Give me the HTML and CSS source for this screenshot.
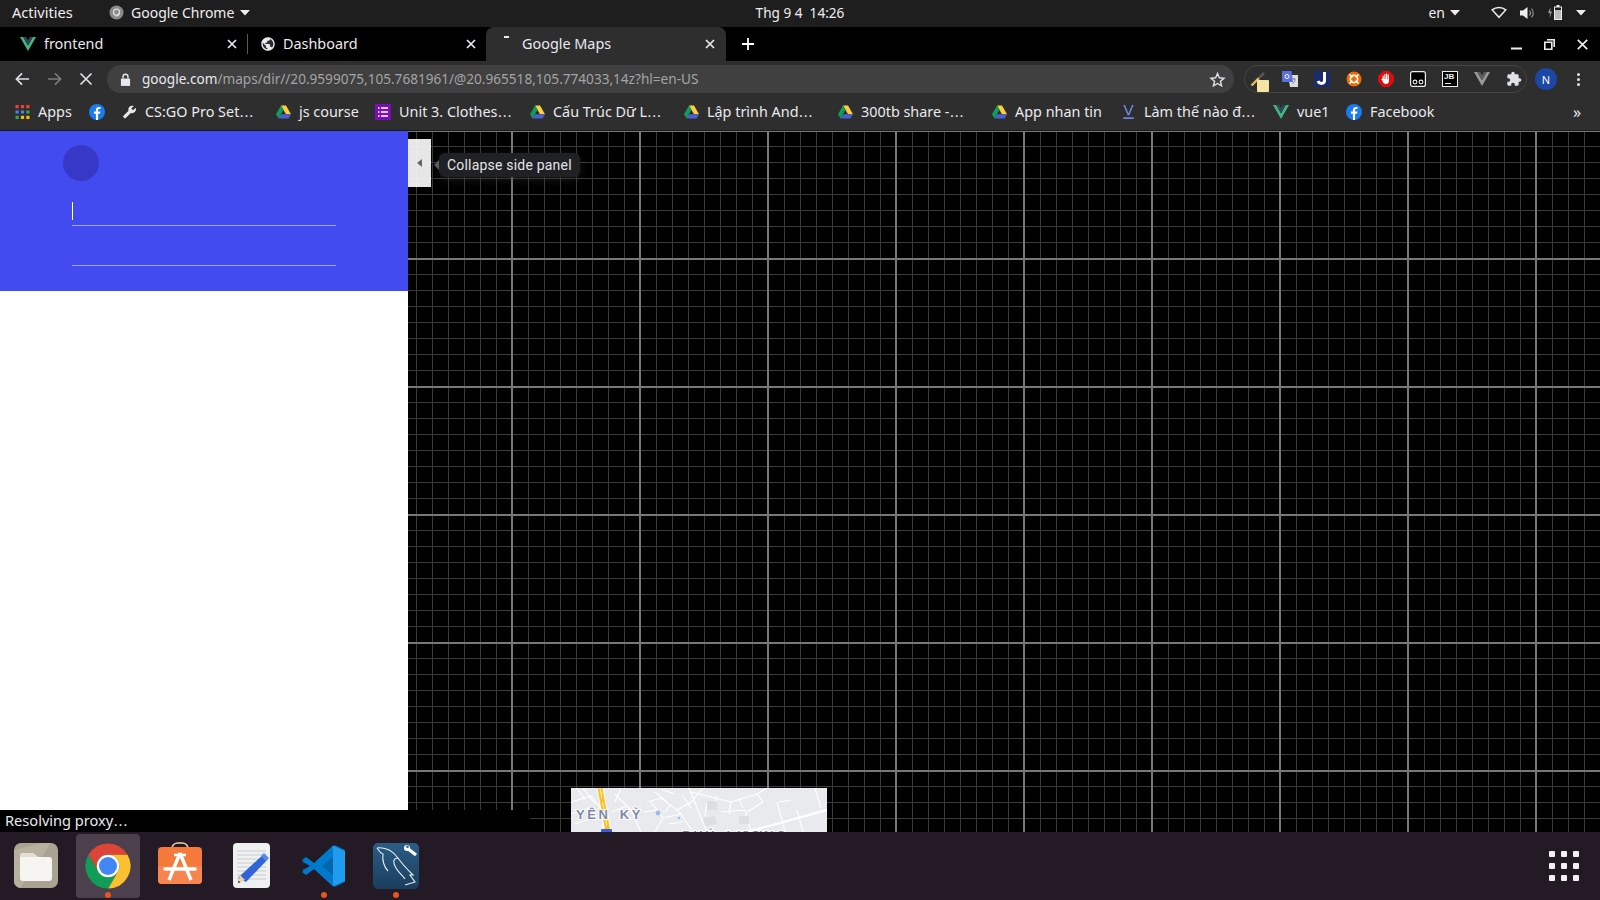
FILE: index.html
```html
<!DOCTYPE html>
<html lang="en">
<head>
<meta charset="utf-8">
<title>Google Maps</title>
<link rel="stylesheet" href="styles.css">
</head>
<body>
<svg class="defs" width="0" height="0" aria-hidden="true">
  <symbol id="vue" viewBox="0 0 256 221"><path fill="#41b883" d="M0 0L128 221 256 0H205L128 133 51 0Z"/><path fill="#2f4a55" d="M51 0L128 133 205 0H158L128 51 98 0Z"/></symbol>
  <symbol id="drive" viewBox="0 0 24 21"><path fill="#ffcd40" d="M8 0H16L24 14H16Z"/><path fill="#0f9d58" d="M8 0L12 7 4 21 0 14Z"/><path fill="#4a5fd0" d="M8 14H24L20 21H4Z"/></symbol>
  <symbol id="fb" viewBox="0 0 24 24"><circle cx="12" cy="12" r="12" fill="#1a7cf0"/><path fill="#fff" d="M13.6 24V14.8H16.6L17.1 11.4H13.6V9.3C13.6 8.3 14 7.6 15.4 7.6H17.2V4.6C16.8 4.5 15.8 4.4 14.7 4.4 12.2 4.4 10.4 5.9 10.4 8.8V11.4H7.4V14.8H10.4V24Z"/></symbol>
  <symbol id="close" viewBox="0 0 10 10"><path d="M1 1L9 9M9 1L1 9" stroke="#e8eaed" stroke-width="1.7" fill="none"/></symbol>
  <symbol id="caret" viewBox="0 0 10 6"><path fill="#eee" d="M0 0H10L5 5.5Z"/></symbol>
</svg>

<div class="screen">
  <header class="topbar">
    <div class="top-left">
      <span class="activities">Activities</span>
      <span class="appmenu">
        <svg class="top-chrome" viewBox="0 0 16 16"><circle cx="8" cy="8" r="7.5" fill="#8a8a8a"/><circle cx="8" cy="7.6" r="3.2" fill="none" stroke="#ddd" stroke-width="1.4"/><path d="M11 8.5C10.6 11 9 12 7 12" stroke="#ddd" stroke-width="1.2" fill="none"/></svg>
        <span>Google Chrome</span>
        <svg class="caret"><use href="#caret"/></svg>
      </span>
    </div>
    <div class="clock">Thg 9 4&nbsp;&nbsp;14:26</div>
    <div class="top-right">
      <span class="lang">en</span>
      <svg class="caret caret-lang"><use href="#caret"/></svg>
      <svg class="tray tray-wifi" viewBox="0 0 16 12"><path fill="none" stroke="#eee" stroke-width="1.5" d="M1.2 3.4C5 .2 11 .2 14.8 3.4L8 10.8Z"/></svg>
      <svg class="tray tray-vol" viewBox="0 0 15 14"><path fill="#eee" d="M0 4.5H3L7.5 1V13L3 9.5H0Z"/><path fill="none" stroke="#999" stroke-width="1.1" d="M9.5 4.5C10.8 6 10.8 8 9.5 9.5M11.5 2.5C13.8 5 13.8 9 11.5 11.5"/></svg>
      <svg class="tray tray-bat" viewBox="0 0 15 15"><path fill="#999" d="M2.5 2L0 8H2L1.5 13 4 6.5H2.2Z"/><path fill="#eee" d="M8.5 0H11.5V1.5H14V15H6V1.5H8.5ZM7 2.5V14H13V2.5Z"/><path fill="#bbb" d="M7 5H13V14H7Z"/></svg>
      <svg class="caret caret-sys"><use href="#caret"/></svg>
    </div>
  </header>

  <div class="tabstrip">
    <div class="tab tab-first">
      <svg class="favicon favicon-vue"><use href="#vue"/></svg>
      <span class="tab-title">frontend</span>
      <svg class="tab-close"><use href="#close"/></svg>
    </div>
    <div class="tab tab-second">
      <svg class="favicon" viewBox="0 0 24 24"><circle cx="12" cy="12" r="10.5" fill="#2a2a2a"/><path fill="#e8eaed" d="M12 2C6.48 2 2 6.48 2 12s4.48 10 10 10 10-4.48 10-10S17.52 2 12 2zm-1 17.93c-3.95-.49-7-3.85-7-7.93 0-.62.08-1.21.21-1.79L9 15v1c0 1.1.9 2 2 2v1.93zm6.9-2.54c-.26-.81-1-1.39-1.9-1.39h-1v-3c0-.55-.45-1-1-1H8v-2h2c.55 0 1-.45 1-1V7h2c1.1 0 2-.9 2-2v-.41c2.93 1.19 5 4.06 5 7.41 0 2.08-.8 3.97-2.1 5.39z"/></svg>
      <span class="tab-title">Dashboard</span>
      <svg class="tab-close"><use href="#close"/></svg>
    </div>
    <div class="tab tab-active">
      <span class="loading-dash"></span>
      <span class="tab-title">Google Maps</span>
      <svg class="tab-close"><use href="#close"/></svg>
    </div>
    <svg class="newtab" viewBox="0 0 12 12"><path d="M6 0V12M0 6H12" stroke="#fff" stroke-width="1.8"/></svg>
    <div class="winctl">
      <svg class="win" viewBox="0 0 11 11"><path d="M0 9.5H11" stroke="#eee" stroke-width="2"/></svg>
      <svg class="win" viewBox="0 0 11 11"><path fill="none" stroke="#eee" stroke-width="1.6" d="M3 .8H10.2V8M.8 3.2H7.8V10.2H.8Z"/></svg>
      <svg class="win" viewBox="0 0 11 11"><path d="M.8 .8L10.2 10.2M10.2 .8L.8 10.2" stroke="#eee" stroke-width="1.7"/></svg>
    </div>
  </div>

  <div class="toolbar">
    <svg class="nav" viewBox="0 0 16 14"><path fill="none" stroke="#dfe1e5" stroke-width="1.8" d="M15 7H2M7.5 1L1.5 7L7.5 13"/></svg>
    <svg class="nav" viewBox="0 0 16 14"><path fill="none" stroke="#7b7b7b" stroke-width="1.8" d="M1 7H14M8.5 1L14.5 7L8.5 13"/></svg>
    <svg class="nav nav-stop" viewBox="0 0 14 14"><path fill="none" stroke="#dfe1e5" stroke-width="1.7" d="M1.5 1.5L12.5 12.5M12.5 1.5L1.5 12.5"/></svg>
    <div class="omnibox">
      <svg class="lock" viewBox="0 0 12 14"><path fill="#e8eaed" d="M1 6H11V14H1Z"/><path fill="none" stroke="#e8eaed" stroke-width="1.5" d="M3.3 6V4A2.7 2.7 0 0 1 8.7 4V6"/></svg>
      <span class="url"><span class="host">google.com</span>/maps/dir//20.9599075,105.7681961/@20.965518,105.774033,14z?hl=en-US</span>
      <svg class="star" viewBox="0 0 24 24"><path fill="none" stroke="#dfe1e5" stroke-width="2" d="M12 3.5L14.6 9.6 21.2 10.2 16.2 14.5 17.7 21 12 17.6 6.3 21 7.8 14.5 2.8 10.2 9.4 9.6Z"/></svg>
    </div>
    <div class="extensions">
      <span class="ext ext-pen">
        <svg viewBox="0 0 16 16"><path d="M1.5 14.5L9 7" stroke="#e2c25a" stroke-width="2.4"/><path d="M9 7L14 2" stroke="#555" stroke-width="2.6"/></svg>
        <span class="pen-badge"></span>
      </span>
      <svg class="ext" viewBox="0 0 16 16"><path fill="#ddd" d="M6 4H16V16H8Z"/><path fill="#5a6fe0" d="M0 0H9.5L11 11H0Z"/><circle cx="5" cy="5.5" r="2" fill="none" stroke="#fff" stroke-width="1"/><path d="M10 8H14M12 7V9M10.5 13L13.5 9" stroke="#888" stroke-width=".9"/></svg>
      <svg class="ext" viewBox="0 0 16 16"><path fill="#1b2a6e" d="M0 0H16V16H0Z"/><path fill="none" stroke="#fff" stroke-width="3" d="M10.5 1V9.5C10.5 13 5.5 13.5 4 10"/></svg>
      <svg class="ext" viewBox="0 0 16 16"><circle cx="8" cy="8" r="7.5" fill="#ef6c00"/><circle cx="8" cy="8" r="3.6" fill="none" stroke="#fff" stroke-width="1.6"/><path d="M3.5 3.5L12.5 12.5M12.5 3.5L3.5 12.5" stroke="#fff" stroke-width="1.6"/><circle cx="8" cy="8" r="2.3" fill="#ef6c00"/></svg>
      <svg class="ext" viewBox="0 0 16 16"><path fill="#e00b0b" d="M5 0H11L16 5V11L11 16H5L0 11V5Z"/><path fill="#fff" d="M4.6 4.8H5.8V8H6.3V3.2H7.5V8H8V2.6H9.2V8H9.7V3.4H10.9V10C10.9 12 9.6 13 8 13 6.5 13 5.5 12.2 4.8 10.8L3.2 8 4.2 7.4 4.6 8Z"/></svg>
      <svg class="ext" viewBox="0 0 16 16"><rect x=".6" y=".6" width="14.8" height="14.8" rx="2" fill="#000" stroke="#eee" stroke-width="1.2"/><circle cx="5" cy="11" r="1.9" fill="none" stroke="#eee" stroke-width="1.1"/><circle cx="11" cy="11" r="1.9" fill="none" stroke="#eee" stroke-width="1.1"/></svg>
      <span class="ext ext-jb"><span class="jb-text">JB</span><span class="jb-line"></span></span>
      <svg class="ext" viewBox="0 0 16 14"><path fill="#9a9a9a" d="M0 0L8 14 16 0H12.8L8 8.3 3.2 0Z"/><path fill="#5e5e5e" d="M3.2 0L8 8.3 12.8 0H9.9L8 3.3 6.1 0Z"/></svg>
      <svg class="ext" viewBox="0 0 24 24"><path fill="#dfe1e5" d="M20.5 11H19V7c0-1.1-.9-2-2-2h-4V3.5C13 2.12 11.88 1 10.5 1S8 2.12 8 3.5V5H4c-1.1 0-1.99.9-1.99 2v3.8H3.5c1.49 0 2.7 1.21 2.7 2.7s-1.21 2.7-2.7 2.7H2V20c0 1.1.9 2 2 2h3.8v-1.5c0-1.49 1.21-2.7 2.7-2.7 1.49 0 2.7 1.21 2.7 2.7V22H17c1.1 0 2-.9 2-2v-4h1.5c1.38 0 2.5-1.12 2.5-2.5S21.88 11 20.5 11z"/></svg>
    </div>
    <span class="profile">N</span>
    <span class="kebab"><i></i><i></i><i></i></span>
  </div>

  <nav class="bookmarks">
    <span class="bm">
      <svg class="bm-icon" viewBox="0 0 13 13"><path fill="#ea4335" d="M0 0H3V3H0ZM5 0H8V3H5ZM10 0H13V3H10Z"/><path fill="#4285f4" d="M0 5H3V8H0ZM5 5H8V8H5Z"/><path fill="#34a853" d="M10 5H13V8H10ZM0 10H3V13H0Z"/><path fill="#fbbc04" d="M5 10H8V13H5ZM10 10H13V13H10Z"/></svg>
      <span>Apps</span>
    </span>
    <span class="bm"><svg class="bm-icon bm-icon-l"><use href="#fb"/></svg></span>
    <span class="bm">
      <svg class="bm-icon bm-wrench" viewBox="0 0 24 24"><path fill="#e8eaed" d="M22.7 19l-9.1-9.1c.9-2.3.4-5-1.5-6.9-2-2-5-2.4-7.4-1.3L9 6 6 9 1.6 4.7C.4 7.1.9 10.1 2.9 12.1c1.9 1.9 4.6 2.4 6.9 1.5l9.1 9.1c.4.4 1 .4 1.4 0l2.3-2.3c.5-.4.5-1.1.1-1.4z"/></svg>
      <span>CS:GO Pro Set<span class="ell">…</span></span>
    </span>
    <span class="bm"><svg class="bm-icon"><use href="#drive"/></svg><span>js course</span></span>
    <span class="bm">
      <svg class="bm-icon bm-icon-l" viewBox="0 0 16 16"><path fill="#7b0fb5" d="M0 0H16V16H0Z"/><path d="M3 4H4.5M6 4H13M3 8H4.5M6 8H13M3 12H4.5M6 12H13" stroke="#fff" stroke-width="1.6"/></svg>
      <span>Unit 3. Clothes<span class="ell">…</span></span>
    </span>
    <span class="bm"><svg class="bm-icon"><use href="#drive"/></svg><span>Cấu Trúc Dữ L<span class="ell">…</span></span></span>
    <span class="bm"><svg class="bm-icon"><use href="#drive"/></svg><span>Lập trình And<span class="ell">…</span></span></span>
    <span class="bm"><svg class="bm-icon"><use href="#drive"/></svg><span>300tb share -<span class="ell">…</span></span></span>
    <span class="bm"><svg class="bm-icon"><use href="#drive"/></svg><span>App nhan tin</span></span>
    <span class="bm">
      <svg class="bm-icon" viewBox="0 0 14 16"><path fill="#6d86d8" d="M1 0H3L7 9.5 11 0H13L7.8 12H6.2Z"/><path fill="#6d86d8" d="M1 14H13V16H1Z"/></svg>
      <span>Làm thế nào đ<span class="ell">…</span></span>
    </span>
    <span class="bm"><svg class="bm-icon bm-icon-l"><use href="#vue"/></svg><span>vue1</span></span>
    <span class="bm"><svg class="bm-icon bm-icon-l"><use href="#fb"/></svg><span>Facebook</span></span>
    <span class="bm-more">»</span>
  </nav>

  <main class="content">
    <aside class="sidepanel">
      <div class="directions">
        <span class="dir-avatar"></span>
        <div class="dir-field dir-field-first"><span class="text-caret"></span></div>
        <div class="dir-field"></div>
      </div>
    </aside>
    <section class="map">
      <button class="collapse" type="button"><span class="collapse-arrow"></span></button>
      <div class="tooltip">Collapse side panel</div>
      <svg class="tile" viewBox="0 0 256 44">
        <rect width="256" height="44" fill="#e8eaed"/>
        <g fill="none" stroke="#fff" stroke-width="1.1">
          <path d="M0 14L20 8L34 26L30 44M12 0L24 16M6 0L14 12M0 26L18 20M4 36L22 30M44 6L60 22L70 44M50 0L44 14M40 24L56 18"/>
          <path d="M76 14L90 10L106 22L120 14L132 0M80 14L92 30L84 44M92 30L110 26L122 44M106 22L110 26M84 4L96 14M72 24L86 22M98 36L112 34M92 2L104 6M100 16L94 24M112 8L120 20"/>
          <path d="M118 0L136 44M120 4L160 14L186 6L196 0M136 14L134 28M160 14L158 26M150 24L174 22L180 44M186 6L192 14L176 24M146 8L142 20M168 10L172 20"/>
          <path d="M206 14L214 44M226 22L232 44M244 0L250 20M208 14L220 12"/>
        </g>
        <path d="M176 44L256 22" fill="none" stroke="#fff" stroke-width="2.4"/>
        <path d="M29 0L37 44" fill="none" stroke="#fff" stroke-width="7"/>
        <path d="M29 0L37 44" fill="none" stroke="#fbc02d" stroke-width="5"/>
        <path d="M29 0L37 44" fill="none" stroke="#ffe9a0" stroke-width="1.1" stroke-dasharray="10 4"/>
        <rect x="30" y="41" width="11" height="6" rx="1" fill="#3b5bdb"/>
        <circle cx="87" cy="25" r="2.4" fill="#9db8f5"/>
        <circle cx="108" cy="30" r="1.2" fill="#9db8f5"/>
        <path d="M136 13H146V22H136ZM132 30L144 28 146 36 134 38ZM168 28H178V36H168Z" fill="#dcdee2"/>
        <text class="tile-label" x="5" y="31">YÊN KỲ</text>
        <text class="tile-label" x="111" y="52">PHÚ LƯƠNG</text>
      </svg>
    </section>
    <div class="statusbubble">Resolving proxy<span class="ell">…</span></div>
  </main>

  <footer class="dock">
    <div class="dock-item">
      <svg class="dock-icon" viewBox="0 0 48 48"><rect x="2" y="1" width="44" height="45" rx="7" fill="#aaa391"/><path d="M2 8L30 1H39L8 46H9A7 7 0 0 1 2 39Z" fill="#b8b1a0"/><path d="M8 14A3 3 0 0 1 11 11H21L26 15H37A3 3 0 0 1 40 18V36A3 3 0 0 1 37 39H11A3 3 0 0 1 8 36Z" fill="#f7f5f2"/><path d="M8 14A3 3 0 0 1 11 11H21L26 15H8Z" fill="#e3dfd8"/></svg>
    </div>
    <div class="dock-item dock-active">
      <svg class="dock-icon" viewBox="0 0 48 48">
        <path fill="#db4437" d="M24 1.5A22.5 22.5 0 0 1 43.5 12.75H24A11.25 11.25 0 0 0 14.26 29.63L4.5 12.75A22.5 22.5 0 0 1 24 1.5Z"/>
        <path fill="#fbc02d" d="M43.5 12.75A22.5 22.5 0 0 1 24 46.5L33.74 29.63A11.25 11.25 0 0 0 24 12.75Z"/>
        <path fill="#0f9d58" d="M24 46.5A22.5 22.5 0 0 1 4.5 12.75L14.26 29.63A11.25 11.25 0 0 0 33.74 29.63Z"/>
        <circle cx="24" cy="24" r="11.25" fill="#fff"/><circle cx="24" cy="24" r="9" fill="#4285f4"/>
      </svg>
      <span class="dock-dot"></span>
    </div>
    <div class="dock-item">
      <svg class="dock-icon" viewBox="0 0 48 48"><path fill="none" stroke="#f2d4ae" stroke-width="1.6" d="M16 8V6A6 6 0 0 1 22 1H26A6 6 0 0 1 32 6V8"/><rect x="2" y="5" width="44" height="37" rx="4" fill="#f5793a"/><path d="M2 24H46V38A4 4 0 0 1 42 42H6A4 4 0 0 1 2 38Z" fill="#f68550"/><path fill="none" stroke="#fff" stroke-width="3.4" d="M24 11L13 38M24 11L35 38"/><path d="M9 27H39" stroke="#fff" stroke-width="3.6" stroke-linecap="round"/><path d="M18 13H30" stroke="#fff" stroke-width="2.6"/></svg>
    </div>
    <div class="dock-item">
      <svg class="dock-icon" viewBox="0 0 48 48"><rect x="5" y="1" width="37" height="45" rx="4" fill="#eff0f1"/><path stroke="#c4c6ca" stroke-width=".9" d="M9 9H38M9 13H38M9 17H38M9 21H38M9 25H38M9 29H38M9 33H38M9 37H38"/><path d="M36 12L14 32 10 36 18 40 40 17Z" fill="#2f63d8"/><path d="M36 11L41 16 38 19 33 14Z" fill="#5a8aee"/><path d="M12 33L17 38 10 41Z" fill="#f1d2a3"/><path d="M10.5 38.5L12.5 40.3 10 41Z" fill="#333"/></svg>
    </div>
    <div class="dock-item">
      <svg class="dock-icon" viewBox="0 0 48 48"><path fill="#0065a9" d="M35 3L14 24 5.5 17.5 2 20 10.5 24 2 28 5.5 30.5 14 24 35 45 45 40V8Z"/><path fill="#007acc" d="M33 3.5L14 21 6 15 2 18 10 24 2 30 6 33 14 27 33 44.5V33L22 24 33 15Z"/><path fill="#1f9cf0" d="M33 3.5L45 9V39L33 44.5Z"/></svg>
      <span class="dock-dot"></span>
    </div>
    <div class="dock-item">
      <svg class="dock-icon" viewBox="0 0 48 48"><defs><linearGradient id="mysqlbg" x1="0" y1="0" x2="0" y2="1"><stop offset="0" stop-color="#2a5d85"/><stop offset="1" stop-color="#1b3e5e"/></linearGradient></defs><rect x="1" y="1" width="46" height="46" rx="5" fill="url(#mysqlbg)"/><path fill="none" stroke="#e8eef3" stroke-width="1.1" d="M5 6C12 5 20 8 26 16C30 22 35 27 41 33L38 33L43 40L33 43M5 6C7 9 8 11 11 12C10 18 12 25 16 29M26 16C22 16 20 19 24 26C27 31 31 34 33 37"/><path stroke="#fff" stroke-width="3.2" d="M35 6L44 13"/><circle cx="35" cy="6" r="3" fill="#fff"/><circle cx="35.5" cy="4.8" r="1.3" fill="#2a5d85"/></svg>
      <span class="dock-dot"></span>
    </div>
    <div class="showapps"><i></i><i></i><i></i><i></i><i></i><i></i><i></i><i></i><i></i></div>
  </footer>
</div>
</body>
</html>
```
FILE: styles.css
```css
* { box-sizing: border-box; }
html, body { margin: 0; padding: 0; background: #000; }
.defs { position: absolute; }
.screen {
  width: 1600px; height: 900px; overflow: hidden;
  display: flex; flex-direction: column;
  font-family: "Noto Sans", "Open Sans", "DejaVu Sans", sans-serif;
  color: #e8eaed;
}
svg { display: block; flex: none; }
.ell { font-family: "DejaVu Sans", sans-serif; }

/* Top bar */
.topbar {
  height: 27px; flex: none; background: #1e1e1e; color: #eee; font-size: 14px; padding-bottom: 2px;
  display: grid; grid-template-columns: 1fr auto 1fr; align-items: center;
}
.top-left, .top-right, .appmenu { display: flex; align-items: center; }
.activities { margin: 0 0 2px 12px; width: 97px; font-size: 14.6px; }
.appmenu { gap: 5px; }
.top-chrome { width: 15px; height: 15px; margin-right: 2px; }
.caret { width: 10px; height: 6px; margin-left: 1px; }
.clock { font-size: 13.6px; }
.top-right { justify-content: flex-end; }
.lang { font-size: 14px; margin-right: 4px; }
.caret-lang { margin-right: 31px; }
.tray-wifi { width: 16px; height: 13px; margin-right: 13px; }
.tray-vol { width: 15px; height: 14px; margin-right: 13px; }
.tray-bat { width: 15px; height: 15px; margin-right: 12px; }
.caret-sys { margin-right: 14px; }

/* Tabs */
.tabstrip { height: 34px; flex: none; background: #000; display: flex; align-items: stretch; font-size: 14.4px; }
.tab { display: flex; align-items: center; position: relative; }
.tab-first { width: 248px; padding-left: 20px; }
.tab-second { width: 238px; padding-left: 12px; }
.tab-first::after {
  content: ""; position: absolute; right: 0; top: 7px; height: 20px; width: 1px; background: #5a5a5a;
}
.tab-active { width: 240px; padding-left: 36px; background: #2e2e2e; border-radius: 8px 8px 0 0; }
.favicon { width: 16px; height: 16px; margin-right: 7px; }
.favicon-vue { height: 14px; margin-right: 8px; }
.tab-title { flex: 1; white-space: nowrap; margin-bottom: 2px; }
.tab-close { width: 10px; height: 10px; }
.tab-first .tab-close { margin-right: 11px; }
.tab-second .tab-close { margin-right: 10px; }
.tab-active .tab-close { margin-right: 11px; }
.loading-dash { position: absolute; left: 18px; top: 9px; width: 5px; height: 2px; background: #e8eaed; }
.newtab { width: 12px; height: 12px; margin: 11px 0 0 16px; }
.winctl { margin-left: auto; display: flex; align-items: center; gap: 22px; padding-right: 12px; }
.win { width: 11px; height: 11px; }

/* Toolbar */
.toolbar { height: 36px; flex: none; background: #2e2e2e; display: flex; align-items: center; padding-left: 15px; }
.nav { width: 15px; height: 14px; margin-right: 17px; }
.nav-stop { width: 14px; margin-right: 14px; }
.omnibox {
  width: 1127px; height: 28px; border-radius: 14px; background: #404040;
  display: flex; align-items: center; padding-left: 13px;
}
.lock { width: 11px; height: 13px; margin-right: 11px; }
.url { font-size: 13.6px; color: #a4a4a4; white-space: nowrap; flex: 1; margin-bottom: 2px; }
.host { color: #e8eaed; }
.star { width: 17px; height: 17px; margin-right: 8px; }
.extensions {
  width: 283px; height: 28px; margin-left: 10px; border: 1px solid #454545; border-radius: 14px;
  display: flex; align-items: center; gap: 16px; padding-left: 5px; flex: none;
}
.ext { width: 16px; height: 16px; flex: none; position: relative; display: block; }
.ext-pen svg { width: 16px; height: 16px; }
.pen-badge { position: absolute; left: 7px; top: 9px; width: 12px; height: 12px; border-radius: 1px; background: #f4e6a2; }
.ext-jb { background: #000; border: 1px solid #eee; overflow: hidden; }
.jb-text { position: absolute; left: 1px; top: -1px; font: 700 8px/11px "Liberation Sans", sans-serif; color: #eee; }
.jb-line { position: absolute; left: 2px; bottom: 2px; width: 6px; height: 1px; background: #eee; }
.profile {
  width: 22px; height: 22px; margin-left: 8px; border-radius: 50%; background: #1c47a6; color: #fff;
  font-size: 11px; display: flex; align-items: center; justify-content: center; flex: none;
}
.kebab { margin-left: 20px; display: flex; flex-direction: column; gap: 2px; }
.kebab i { display: block; width: 3px; height: 3px; border-radius: 50%; background: #dfe1e5; }

/* Bookmarks */
.bookmarks {
  height: 34px; flex: none; background: #2e2e2e; border-bottom: 1px solid #191919; font-size: 14.4px;
  display: grid; align-items: center; padding-left: 15px; padding-bottom: 4px;
  grid-template-columns: 74px 33px 154px 99px 155px 154px 154px 154px 129px 152px 73px 1fr 27px;
}
.bm { display: flex; align-items: center; gap: 8px; white-space: nowrap; }
.bm-icon { width: 15px; height: 14px; }
.bm-icon-l { width: 16px; height: 16px; }
.bm-wrench { transform: scaleX(-1); }
.bm-more { font-size: 16px; line-height: 16px; }

/* Content */
.content { flex: 1; min-height: 0; display: flex; position: relative; }
.sidepanel { width: 408px; flex: none; background: #fff; }
.directions { height: 160px; background: #424bef; padding: 14px 0 0 72px; display: flex; flex-direction: column; }
.dir-avatar { display: block; width: 36px; height: 36px; margin-left: -9px; border-radius: 50%; background: #3838c8; flex: none; }
.dir-field { width: 264px; height: 40px; flex: none; border-bottom: 1px solid #a3a8f7; }
.dir-field-first { height: 45px; padding-top: 21px; }
.text-caret { display: block; width: 1px; height: 18px; background: #fff; }

.map {
  flex: 1; position: relative; overflow: hidden; background-color: #000;
  background-image:
    linear-gradient(to right, #787878 2px, transparent 2px),
    linear-gradient(to bottom, #787878 2px, transparent 2px),
    linear-gradient(to right, #3a3a3a 1px, transparent 1px),
    linear-gradient(to bottom, #3a3a3a 1px, transparent 1px);
  background-size: 128px 128px, 128px 128px, 16px 16px, 16px 16px;
  background-position: 103px 0, 0 127px, 8px 0, 0 15px;
}
.collapse {
  position: absolute; left: 0; top: 8px; width: 23px; height: 48px; padding: 0; border: 0;
  background: rgba(255, 255, 255, .9); display: flex; align-items: center; justify-content: center;
}
.collapse-arrow { width: 0; height: 0; border: 4px solid transparent; border-left: 0; border-right: 5px solid #666; }
.tooltip {
  position: absolute; left: 31px; top: 22px; height: 24px; padding: 0 8px;
  background: #202124; color: #e3e4e6; border-radius: 6px; font: 14px/24px Roboto, sans-serif; letter-spacing: .2px;
  box-shadow: 0 2px 10px rgba(60, 60, 60, .45); white-space: nowrap;
}
.tooltip::before {
  content: ""; position: absolute; left: -5px; top: 7px; width: 0; height: 0;
  border: 5px solid transparent; border-left: 0; border-right: 5px solid #5a5a5a;
}
.tile { position: absolute; left: 163px; bottom: 0; width: 256px; height: 44px; }
.tile-label {
  font: 700 13px "Liberation Sans", Arial, sans-serif; fill: #7c88a6; letter-spacing: 2.6px; word-spacing: 3px;
  paint-order: stroke; stroke: #fff; stroke-width: 2px;
}
.statusbubble {
  position: absolute; left: 0; bottom: 0; width: 530px; height: 22px; padding-left: 5px;
  background: #000; color: #e8eaed; font-size: 14.6px; line-height: 21px;
}

/* Dock */
.dock { height: 68px; flex: none; background: #241a26; display: flex; align-items: stretch; }
.dock-item { width: 72px; position: relative; display: flex; align-items: center; justify-content: center; }
.dock-active::before {
  content: ""; position: absolute; left: 4px; top: 2px; width: 64px; height: 64px; border-radius: 4px; background: #4b404b;
}
.dock-icon { width: 48px; height: 48px; position: relative; }
.dock-dot { position: absolute; left: 33px; bottom: 2px; width: 6px; height: 6px; border-radius: 50%; background: #e95420; }
.showapps {
  margin: 19px 21px 0 auto; display: grid; grid-template-columns: repeat(3, 6px); grid-auto-rows: 6px; gap: 6px;
}
.showapps i { display: block; border-radius: 1px; background: #f2f2f0; }
```
